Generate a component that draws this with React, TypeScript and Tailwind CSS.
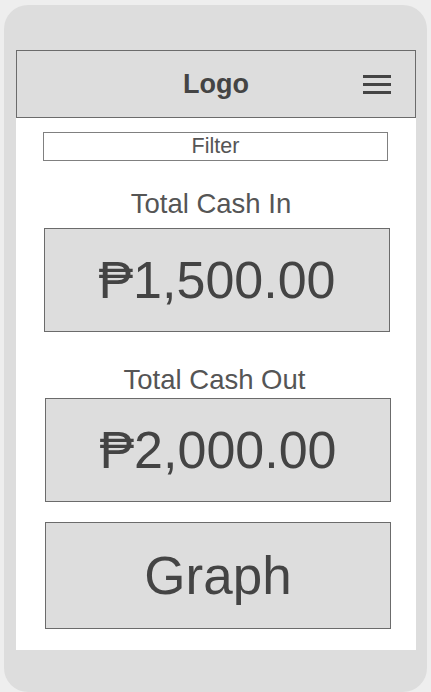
export default function App() {
  return (
    <div
      className="w-[431px] h-[692px] bg-[#eeeeee] overflow-hidden"
      style={{ fontFamily: '"Liberation Sans", Arial, sans-serif' }}
    >
      <div className="ml-[4px] mt-[5px] w-[423px] h-[687px] rounded-[24px] bg-[#dddddd] pt-[45px] pl-[12px]">
        <div className="w-[400px] h-[600px] bg-white flex flex-col">
          <header className="h-[68px] bg-[#dddddd] border border-[#6b6b6b] relative flex items-center justify-center">
            <span className="text-[27px] font-bold text-[#444444] leading-none">Logo</span>
            <div className="absolute right-[24px] top-[24px] flex flex-col gap-[5px]">
              <div className="w-[28px] h-[3px] bg-[#444444]" />
              <div className="w-[28px] h-[3px] bg-[#444444]" />
              <div className="w-[28px] h-[3px] bg-[#444444]" />
            </div>
          </header>

          <div className="mt-[14px] ml-[27px] w-[345px] h-[29px] border border-[#808080] flex items-center justify-center text-[21.5px] text-[#555555] leading-none">
            Filter
          </div>

          <div className="mt-[28px] pr-[10px] text-center text-[27.5px] text-[#555555] leading-[30px]">
            Total Cash In
          </div>
          <div className="mt-[9px] ml-[28px] w-[346px] h-[104px] bg-[#dddddd] border border-[#6b6b6b] flex items-center justify-center text-[52px] text-[#444444] leading-none">
            ₱1,500.00
          </div>

          <div className="mt-[33px] pr-[3px] text-center text-[27.5px] text-[#555555] leading-[30px]">
            Total Cash Out
          </div>
          <div className="mt-[3px] ml-[29px] w-[346px] h-[104px] bg-[#dddddd] border border-[#6b6b6b] flex items-center justify-center text-[52px] text-[#444444] leading-none">
            ₱2,000.00
          </div>

          <div className="mt-[20px] ml-[29px] w-[346px] h-[107px] bg-[#dddddd] border border-[#6b6b6b] flex items-center justify-center text-[53px] text-[#444444] leading-none">
            Graph
          </div>
        </div>
      </div>
    </div>
  );
}
